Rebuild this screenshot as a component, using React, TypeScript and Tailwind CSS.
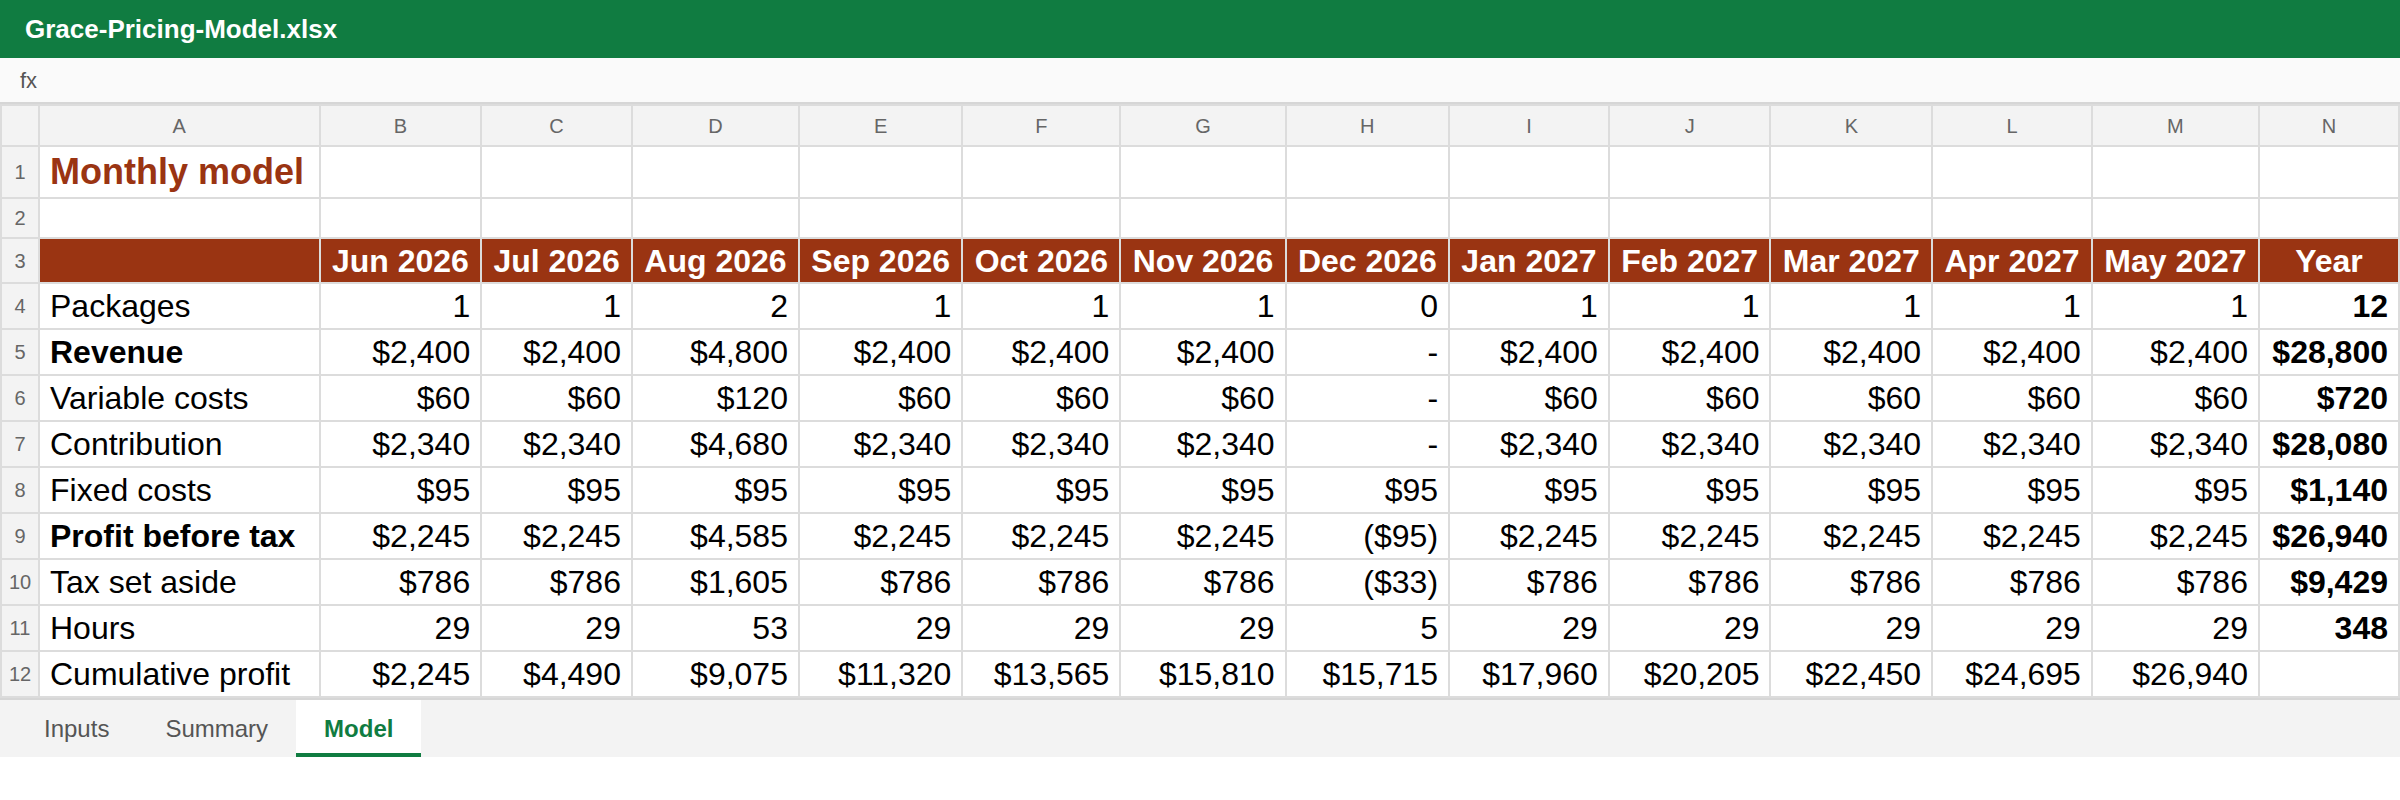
const months = [
  "Jun 2026", "Jul 2026", "Aug 2026", "Sep 2026", "Oct 2026", "Nov 2026",
  "Dec 2026", "Jan 2027", "Feb 2027", "Mar 2027", "Apr 2027", "May 2027",
];

const letters = ["A", "B", "C", "D", "E", "F", "G", "H", "I", "J", "K", "L", "M", "N"];

type Row = { label: string; bold?: boolean; values: string[]; total: string };

const rows: Row[] = [
  { label: "Packages", values: ["1", "1", "2", "1", "1", "1", "0", "1", "1", "1", "1", "1"], total: "12" },
  { label: "Revenue", bold: true, values: ["$2,400", "$2,400", "$4,800", "$2,400", "$2,400", "$2,400", "-", "$2,400", "$2,400", "$2,400", "$2,400", "$2,400"], total: "$28,800" },
  { label: "Variable costs", values: ["$60", "$60", "$120", "$60", "$60", "$60", "-", "$60", "$60", "$60", "$60", "$60"], total: "$720" },
  { label: "Contribution", values: ["$2,340", "$2,340", "$4,680", "$2,340", "$2,340", "$2,340", "-", "$2,340", "$2,340", "$2,340", "$2,340", "$2,340"], total: "$28,080" },
  { label: "Fixed costs", values: ["$95", "$95", "$95", "$95", "$95", "$95", "$95", "$95", "$95", "$95", "$95", "$95"], total: "$1,140" },
  { label: "Profit before tax", bold: true, values: ["$2,245", "$2,245", "$4,585", "$2,245", "$2,245", "$2,245", "($95)", "$2,245", "$2,245", "$2,245", "$2,245", "$2,245"], total: "$26,940" },
  { label: "Tax set aside", values: ["$786", "$786", "$1,605", "$786", "$786", "$786", "($33)", "$786", "$786", "$786", "$786", "$786"], total: "$9,429" },
  { label: "Hours", values: ["29", "29", "53", "29", "29", "29", "5", "29", "29", "29", "29", "29"], total: "348" },
  { label: "Cumulative profit", values: ["$2,245", "$4,490", "$9,075", "$11,320", "$13,565", "$15,810", "$15,715", "$17,960", "$20,205", "$22,450", "$24,695", "$26,940"], total: "" },
];

const cell = "border-2 border-[#dcdcdc] px-[10px] py-0 leading-[36px] whitespace-nowrap";
const rowNum = "border-2 border-[#dcdcdc] bg-[#f3f3f3] text-[20px] leading-[24px] text-[#666] text-center w-[38px] px-0 py-0";

export default function App() {
  return (
    <div className="w-[2400px] bg-white font-['Liberation_Sans',Arial,sans-serif]">
      {/* title bar */}
      <div className="h-[58px] bg-[#107c41] px-[25px] flex items-center text-white font-bold text-[26px]">
        Grace-Pricing-Model.xlsx
      </div>

      {/* formula bar */}
      <div className="h-[46px] bg-[#fafafa] border-b-2 border-[#d6d6d6] px-[20px] flex items-center text-[22px] text-[#555]">
        fx
      </div>

      <table className="w-full border-collapse text-black">
        <thead>
          <tr className="h-[41px]">
            <th className={rowNum} />
            {letters.map((l) => (
              <th key={l} className="border-2 border-[#dcdcdc] bg-[#f3f3f3] text-[20px] leading-[24px] font-normal text-[#666] text-center p-0">
                {l}
              </th>
            ))}
          </tr>
        </thead>
        <tbody className="text-[32px]">
          <tr className="h-[52px]">
            <td className={rowNum}>1</td>
            <td className={`${cell} text-[36px] leading-[40px] font-bold text-[#9a3412]`}>Monthly model</td>
            {letters.slice(1).map((l) => (
              <td key={l} className={cell} />
            ))}
          </tr>
          <tr className="h-[40px]">
            <td className={rowNum}>2</td>
            {letters.map((l) => (
              <td key={l} className={cell} />
            ))}
          </tr>
          <tr className="h-[45px]">
            <td className={rowNum}>3</td>
            <td className={`${cell} bg-[#9a3412]`} />
            {months.map((m) => (
              <td key={m} className={`${cell} bg-[#9a3412] text-white font-bold text-center`}>
                {m}
              </td>
            ))}
            <td className={`${cell} bg-[#9a3412] text-white font-bold text-center`}>Year</td>
          </tr>
          {rows.map((r, i) => (
            <tr key={r.label} className="h-[46px]">
              <td className={rowNum}>{i + 4}</td>
              <td className={`${cell} ${r.bold ? "font-bold" : ""}`}>{r.label}</td>
              {r.values.map((v, j) => (
                <td key={j} className={`${cell} text-right`}>
                  {v}
                </td>
              ))}
              <td className={`${cell} text-right font-bold`}>{r.total}</td>
            </tr>
          ))}
        </tbody>
      </table>

      {/* sheet tabs */}
      <div className="h-[59px] bg-[#f3f3f3] border-t-2 border-[#d6d6d6] pl-[16px] flex text-[24px] leading-[28px]">
        <div className="px-[28px] flex items-center text-[#555]">Inputs</div>
        <div className="px-[28px] flex items-center text-[#555]">Summary</div>
        <div className="px-[28px] flex items-center bg-white text-[#107c41] font-bold border-b-4 border-[#107c41] pt-[4px]">
          Model
        </div>
      </div>
    </div>
  );
}
